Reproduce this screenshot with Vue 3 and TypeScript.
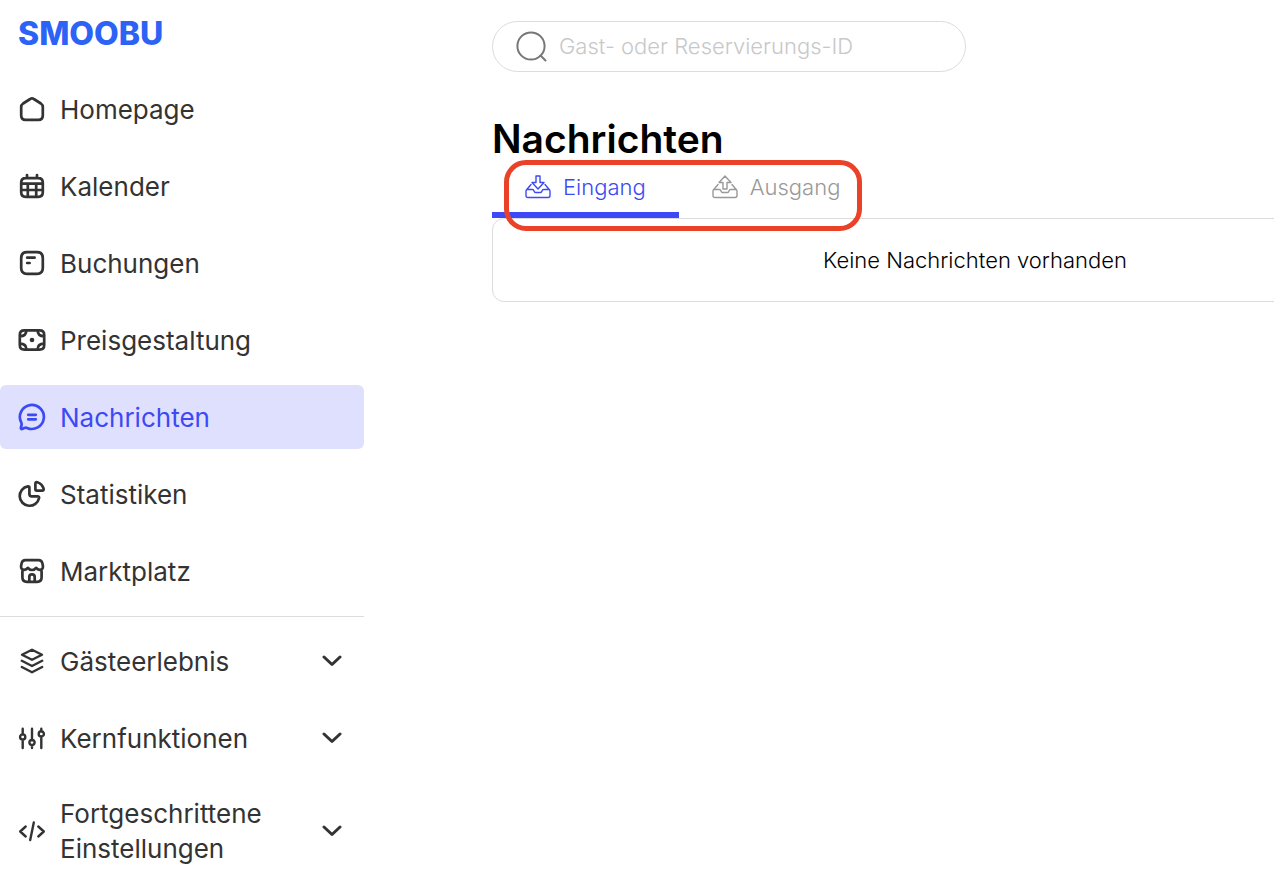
<script setup lang="ts">
import { ref } from 'vue'

interface NavItem {
  label: string
  icon: string
}

const mainItems: NavItem[] = [
  { label: 'Homepage', icon: 'home' },
  { label: 'Kalender', icon: 'calendar' },
  { label: 'Buchungen', icon: 'bookings' },
  { label: 'Preisgestaltung', icon: 'pricing' },
  { label: 'Nachrichten', icon: 'messages' },
  { label: 'Statistiken', icon: 'stats' },
  { label: 'Marktplatz', icon: 'market' },
]

const groups: NavItem[] = [
  { label: 'Gästeerlebnis', icon: 'layers' },
  { label: 'Kernfunktionen', icon: 'sliders' },
  { label: 'Fortgeschrittene Einstellungen', icon: 'code' },
]

const icons: Record<string, string> = {
  home: 'M12.2 4 5.1 8.5Q3.2 9.8 3.2 12v8.4q0 4.4 4.4 4.4h12.8q4.4 0 4.4-4.4V12q0-2.2-1.9-3.5L15.8 4Q14 2.7 12.2 4Z',
  calendar: 'M7.7 6.2h12.6q4.5 0 4.5 4.5v9.6q0 4.5-4.5 4.5H7.7q-4.5 0-4.5-4.5v-9.6q0-4.5 4.5-4.5ZM9 3v3M19 3v3M3.2 11.7h21.6M3.2 18h21.6M9.8 11.7v13M18.2 11.7v13',
  bookings: 'M9 3.2h10q5.8 0 5.8 5.8v10q0 5.8-5.8 5.8H9q-5.8 0-5.8-5.8V9q0-5.8 5.8-5.8ZM9.2 8.7h7.4M9.2 14h2.4',
  pricing: 'M6.4 4.3h15.2q4.6 0 4.6 4.6v10.2q0 4.6-4.6 4.6H6.4q-4.6 0-4.6-4.6V8.9q0-4.6 4.6-4.6ZM8.4 4.3q0 6-6.6 6M19.6 4.3q0 6 6.6 6M8.4 23.7q0-6-6.6-6M19.6 23.7q0-6 6.6-6M13 14a1 1 0 1 0 2 0a1 1 0 1 0-2 0',
  messages: 'M3.2 19.4A12 12 0 1 1 9 24.9Q7.6 24.4 6.3 25.1L4.2 26Q2.7 26.3 2.9 24.7L3.5 22.3Q3.9 20.8 3.2 19.4ZM10.2 11.8h7.6M10.2 16.3h7.6',
  stats: 'M11.4 7.5V14q0 2.3 2.3 2.3h5.6q2 0 1.8 1.7A9.8 9.8 0 1 1 9.9 6.3q1.5-.2 1.5 1.2ZM17.4 3.8q0-2 1.9-1.6A9.6 9.6 0 0 1 25.6 8.7q.4 2-1.5 2H18.8q-1.4 0-1.4-1.4Z',
  market: 'M4.4 13.5v6.8q0 4.5 4.5 4.5h10.2q4.5 0 4.5-4.5v-6.8M7.4 3.2h13.2q3 0 3.7 2.8l.6 2.8q.4 4-3 4-2.5 0-3.8-2-1.4 2.2-4.1 2.2T9.9 10.8Q8.600 12.800 6.100 12.800q-3.400 0-3-4l.6-2.800q.7-2.800 3.700-2.800ZM11.300 24.500v-4.500a2.700 2.700 0 0 1 5.400 0v4.500',
  layers: 'M14 2.7 24 7.8 14 12.8 4 7.8ZM3.8 13.8 14 19l10.2-5.2M3.8 20 14 25.3 24.2 20',
  sliders: 'M4.7 4.8v5.7M4.7 15.5v8.5M14 4.8v11.4M14 21v3M23.3 4.8v2.7M23.3 12.5v11.5M2.1 13a2.6 2.6 0 1 0 5.2 0a2.6 2.6 0 1 0-5.2 0M11.4 18.6a2.6 2.6 0 1 0 5.2 0a2.6 2.6 0 1 0-5.2 0M20.7 9.9a2.6 2.6 0 1 0 5.2 0a2.6 2.6 0 1 0-5.2 0',
  code: 'M7.7 9.5 2.2 14.5l5.5 5M20.3 9.5l5.5 5-5.5 5M15.8 5.5 12.2 23',
}

const tabs = [
  { label: 'Eingang', arrow: 'M11 1h4v6.500h4L13 14 7 7.500h4Z' },
  { label: 'Ausgang', arrow: 'M11 14h4V7.500h4L13 1 7 7.500h4Z' },
]
const tray =
  'M6 9.5 1.8 14.5M20 9.5l4.2 5M1 16q0-1.5 1.5-1.5H7.5q1 0 1.5 1.5T10.5 17.5h5q1 0 1.5-1.5t1.5-1.5h5q1.5 0 1.5 1.5v4.500q0 2-2 2H3q-2 0-2-2Z'

const active = ref('Nachrichten')
const tab = ref('Eingang')
const query = ref('')
</script>

<template>
  <div class="app">
    <aside class="sidebar">
      <a class="logo" href="#">SMOOBU</a>
      <nav class="nav">
        <a
          v-for="item in mainItems"
          :key="item.label"
          href="#"
          class="item"
          :class="{ active: item.label === active }"
          @click.prevent="active = item.label"
        >
          <svg class="icon" viewBox="0 0 28 28" aria-hidden="true"><path :d="icons[item.icon]" /></svg>
          <span class="label">{{ item.label }}</span>
        </a>
      </nav>
      <div class="nav more">
        <button v-for="item in groups" :key="item.label" type="button" class="item">
          <svg class="icon thin" viewBox="0 0 28 28" aria-hidden="true"><path :d="icons[item.icon]" /></svg>
          <span class="label">{{ item.label }}</span>
          <svg class="chevron" viewBox="0 0 20 12" aria-hidden="true"><path d="M2 2l8 7.500L18 2" /></svg>
        </button>
      </div>
    </aside>

    <main class="main">
      <label class="search">
        <svg class="search-icon" viewBox="0 0 32 32" aria-hidden="true">
          <circle cx="15" cy="15" r="13.6" />
          <path d="M24.500 24.500l5 5" />
        </svg>
        <input v-model="query" type="text" placeholder="Gast- oder Reservierungs-ID" aria-label="Gast- oder Reservierungs-ID" />
      </label>

      <h1 class="title">Nachrichten</h1>

      <div class="tabs" role="tablist">
        <button
          v-for="t in tabs"
          :key="t.label"
          type="button"
          role="tab"
          class="tab"
          :class="{ current: tab === t.label }"
          :aria-selected="tab === t.label"
          @click="tab = t.label"
        >
          <svg class="tab-icon" viewBox="0 0 26 24" aria-hidden="true">
            <path :d="t.arrow" />
            <path :d="tray" />
          </svg>
          {{ t.label }}
        </button>
        <div class="highlight"></div>
      </div>

      <section class="panel">Keine Nachrichten vorhanden</section>
    </main>
  </div>
</template>

<style>
html,
body {
  background: #fff;
}
</style>

<style scoped>
.app {
  display: grid;
  grid-template-columns: 364px minmax(0, 1fr);
  min-height: 100vh;
  overflow: hidden;
  font-family: Inter, "Liberation Sans", sans-serif;
  color: #333;
}
.app * {
  box-sizing: border-box;
}
.logo {
  display: block;
  padding: 14px 18px 23px;
  font-size: 32px;
  line-height: 40px;
  font-weight: 800;
  color: #2c63f6;
  text-decoration: none;
}
.nav {
  display: flex;
  flex-direction: column;
  gap: 13px;
}
.more {
  margin-top: 13px;
  padding-top: 12px;
  border-top: 1px solid #dcdcdc;
}
.item {
  display: flex;
  align-items: center;
  gap: 14px;
  width: 100%;
  min-height: 64px;
  padding: 13px 22px 13px 18px;
  border: 0;
  border-radius: 6px;
  background: none;
  color: inherit;
  font-family: inherit;
  font-size: 26px;
  line-height: 35px;
  text-align: left;
  text-decoration: none;
  cursor: pointer;
}
.item.active {
  background: #dfe0fd;
  color: #3d49f5;
}
.label {
  flex: 1;
}
.icon {
  flex: none;
  width: 28px;
  height: 28px;
  stroke-width: 2.7;
}
.icon.thin {
  stroke-width: 2.4;
}
.icon,
.chevron,
.search-icon,
.tab-icon {
  fill: none;
  stroke: currentColor;
  stroke-linecap: round;
  stroke-linejoin: round;
}
.chevron {
  flex: none;
  width: 20px;
  height: 12px;
  stroke-width: 3;
}
.main {
  padding: 21px 0 0 128px;
}
.search {
  display: flex;
  align-items: center;
  gap: 11px;
  width: 100%;
  max-width: 474px;
  height: 51px;
  padding: 0 23px;
  border: 1px solid #dcdcdc;
  border-radius: 26px;
}
.search-icon {
  flex: none;
  width: 32px;
  height: 32px;
  color: #777;
  stroke-width: 2;
}
.search input {
  flex: 1;
  min-width: 0;
  padding: 0 0 2px;
  border: 0;
  outline: 0;
  background: none;
  font-family: inherit;
  font-size: 22px;
  font-weight: 300;
  color: #333;
}
.search input::placeholder {
  color: #c8c8c8;
  opacity: 1;
}
.title {
  margin: 42px 0 0;
  font-size: 39px;
  line-height: 50px;
  font-weight: 600;
  color: #000;
}
.tabs {
  position: relative;
  display: flex;
  width: fit-content;
}
.tab {
  display: flex;
  align-items: center;
  gap: 12px;
  height: 54px;
  padding: 0 33px 2px;
  border: 0;
  border-bottom: 6px solid transparent;
  background: none;
  color: #999;
  font-family: inherit;
  font-size: 22px;
  font-weight: 300;
  cursor: pointer;
}
.tab.current {
  border-bottom-color: #3d49f5;
  color: #3d49f5;
}
.tab-icon {
  flex: none;
  width: 26px;
  height: 24px;
  stroke-width: 1.4;
}
.highlight {
  position: absolute;
  left: 12px;
  top: -4px;
  width: 358px;
  height: 71px;
  border: 5px solid #ea4228;
  border-radius: 22px;
  pointer-events: none;
}
.panel {
  margin-right: -184px;
  padding: 24px 24px 23px;
  border: 1px solid #dcdcdc;
  border-radius: 12px;
  color: #000;
  font-size: 22px;
  line-height: 35px;
  font-weight: 300;
  text-align: center;
}
</style>
